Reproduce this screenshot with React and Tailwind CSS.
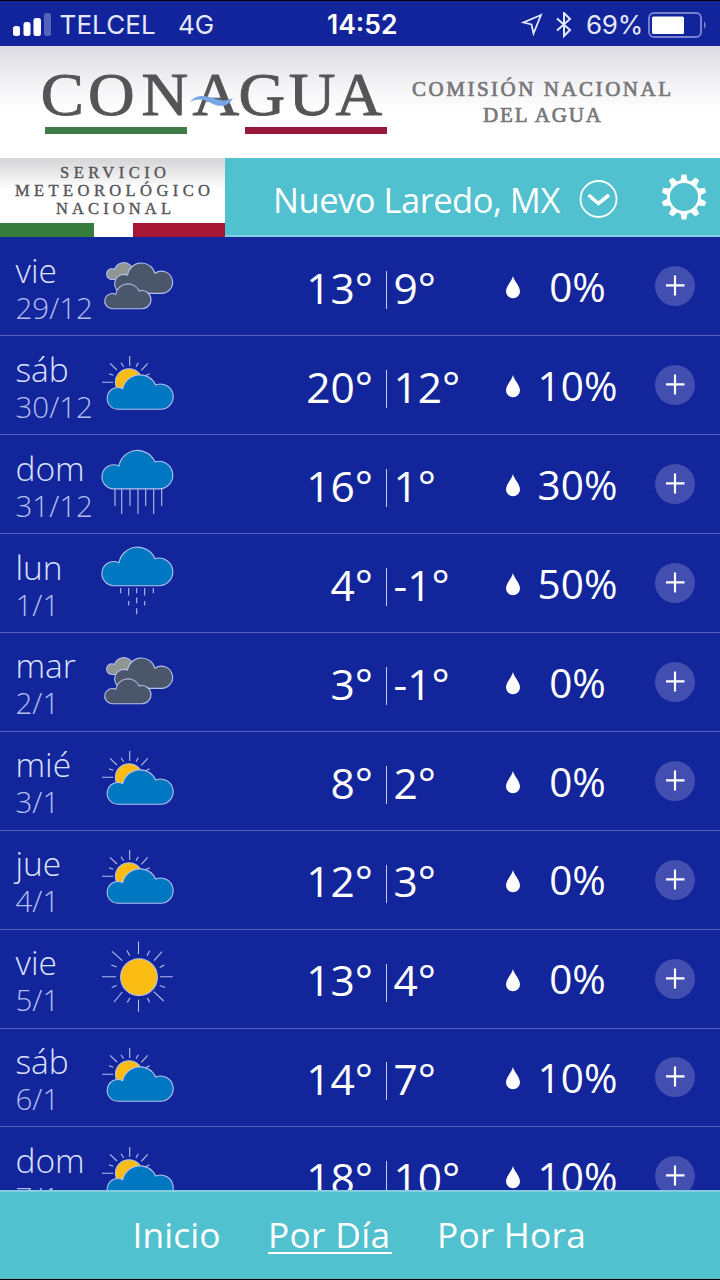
const days = [
  { name: 'vie', date: '29/12', icon: 'cloudy', high: '13°', low: '9°', rain: '0%' },
  { name: 'sáb', date: '30/12', icon: 'partly', high: '20°', low: '12°', rain: '10%' },
  { name: 'dom', date: '31/12', icon: 'rain', high: '16°', low: '1°', rain: '30%' },
  { name: 'lun', date: '1/1', icon: 'drizzle', high: '4°', low: '-1°', rain: '50%' },
  { name: 'mar', date: '2/1', icon: 'cloudy', high: '3°', low: '-1°', rain: '0%' },
  { name: 'mié', date: '3/1', icon: 'partly', high: '8°', low: '2°', rain: '0%' },
  { name: 'jue', date: '4/1', icon: 'partly', high: '12°', low: '3°', rain: '0%' },
  { name: 'vie', date: '5/1', icon: 'sunny', high: '13°', low: '4°', rain: '0%' },
  { name: 'sáb', date: '6/1', icon: 'partly', high: '14°', low: '7°', rain: '10%' },
  { name: 'dom', date: '7/1', icon: 'partly', high: '18°', low: '10°', rain: '10%' },
]

const RAIN_CLOUD = 'M14 53.9H59A13.8 13.8 0 1 0 55 26.9A18.9 18.9 0 0 0 19 30.9A12.05 12.05 0 1 0 14 53.9Z'

function WeatherIcon({ type }) {
  return (
    <svg viewBox="0 0 76 98.9" className="h-[98.9px] w-[76px] shrink-0" fill="none" stroke="#b4c0ee" strokeWidth="1.1">
      {type === 'cloudy' && (
        <>
          <path fill="#8f9694" d="M11.5 42.5H30A9.6 9.6 0 1 0 14.6 32.4A5.4 5.4 0 1 0 11.5 42.5Z" />
          <path fill="#4b566b" d="M24 56.4H61A11.1 11.1 0 1 0 55 36.3A14.1 14.1 0 0 0 27.5 38A9.5 9.5 0 1 0 24 56.4Z" />
          <path fill="#4b566b" d="M12 71.7H41.7A9.05 9.05 0 1 0 39.3 54A12.5 12.5 0 0 0 15.7 57.3A7.6 7.6 0 1 0 12 71.7Z" />
        </>
      )}
      {type === 'partly' && (
        <>
          <path d="M2 46.3H13.3M29.7 20V30M10 27.3L17 34M47.7 27.3L41.3 34.3M9 37.7L13.3 39.3M21 26.7L23.7 30.7M38.3 26.7L36 30.7M49.7 37.7L45.3 39.7" />
          <circle cx="29" cy="46.3" r="13.6" fill="#fbbc14" />
          <path fill="#0078c1" d="M17.7 73.2H60.2A12.6 12.6 0 1 0 55.7 49A17.5 17.5 0 0 0 22.7 52.7A10.8 10.8 0 1 0 17.7 73.2Z" />
        </>
      )}
      {type === 'rain' && (
        <>
          <path d="M15 54V71M21.7 54V79M30 54V71M38 54V79M45.7 54V71M53.7 54V79M61.7 54V71" />
          <path fill="#0078c1" d={RAIN_CLOUD} />
        </>
      )}
      {type === 'drizzle' && (
        <>
          <path fill="#0078c1" transform="translate(0 -2.2)" d={RAIN_CLOUD} />
          <path d="M20.7 54V59.3M28.7 54V61.6M28.7 67V71.6M36.7 54V59.3M36.7 63.6V69.3M36.7 74.3V80.3M44.7 54V61.6M44.7 67V71.6M53.3 54V59.3" />
        </>
      )}
      {type === 'sunny' && (
        <>
          <circle cx="39" cy="48.2" r="18.4" fill="#fbbc14" />
          <path d="M38.5 12.4V25M38.5 70.4V82.7M2 47.8H16M60 47.8H72.7M12 22.4L22.3 31.7M62 22.7L54 31.7M14 73L22.3 63M63.7 72L53.7 62.7" />
          <path d="M11.3 36L16.7 38M27 21.4L29.7 26.7M49.7 21.7L47 26.7M64.3 36L59.7 38.4M11.7 58.4L16.7 56.4M27.3 73.4L30 68.7M49.7 73.4L47.3 68.7M65 58.4L59.7 56.4" />
        </>
      )}
    </svg>
  )
}

function StatusBar() {
  return (
    <div className="flex h-[46px] shrink-0 items-center border-t border-black bg-[#12249b] pt-0.5 font-['Inter',sans-serif] text-[26px] leading-none text-[#e4e8fb]">
      <svg className="ml-[13px] h-[24px] w-[39px]" viewBox="0 0 39 24">
        <rect x="0" y="13" width="7" height="10" rx="2.5" fill="#fff" />
        <rect x="10.5" y="9" width="7" height="14" rx="2.5" fill="#fff" />
        <rect x="20.5" y="5" width="7.5" height="18" rx="2.5" fill="#fff" />
        <rect x="31" y="0" width="7" height="23" rx="2.5" fill="#5663bd" />
      </svg>
      <span className="ml-[7.5px] w-[118.5px] tracking-[0.1px]">TELCEL</span>
      <span className="w-[149px]">4G</span>
      <span className="w-[194px] text-[26.5px] font-semibold text-white">14:52</span>
      <svg className="h-[26px] w-[57px]" viewBox="0 0 57 26" fill="none" stroke="#e4e8fb" strokeWidth="1.8">
        <path d="M20 3L2.5 10.5L10.5 12.5L12.5 21.5Z" strokeLinejoin="miter" />
        <path d="M36 6.5L49 18L43 24V1L49 7L36 18.5" strokeWidth="2" />
      </svg>
      <span className="ml-[8px] w-[62px] tracking-[-0.3px]">69%</span>
      <svg className="h-[26px] w-[61px]" viewBox="0 0 61 26">
        <rect x="1" y="1" width="52" height="24" rx="5" fill="none" stroke="#7682cd" strokeWidth="2" />
        <rect x="4" y="4.5" width="32" height="17.5" rx="1.5" fill="#fff" />
        <path d="M56 9Q59.5 13 56 17Z" fill="#7682cd" />
      </svg>
    </div>
  )
}

function Banner() {
  return (
    <div className="h-[112px] shrink-0 bg-linear-to-b from-[#dcdce3] via-[#f7f6f8] via-40% to-white to-60%">
      <svg viewBox="0 0 720 112" className="h-[112px] w-[720px]" fontFamily="'Liberation Serif', serif">
        <text transform="scale(1.06 1)" x="38.5 83 133.5 181.5 225 272.5 316.5" y="69" fontSize="61" fill="#555557" stroke="#555557" strokeWidth="0.9">CONAGUA</text>
        <path fill="#78a5e6" d="M190 56C198 46 208 51 216 53C223 55 227 55 233 52C228 62 218 61 211 57C204 53 197 52 190 56Z" />
        <rect x="45" y="81" width="142" height="7" fill="#3f7c48" />
        <rect x="245" y="81" width="142" height="7" fill="#98173d" />
        <g fontSize="21" fill="#77777a" stroke="#77777a" strokeWidth="0.7">
          <text x="412" y="50" textLength="259">COMISIÓN NACIONAL</text>
          <text x="483" y="75.5" textLength="118">DEL AGUA</text>
        </g>
      </svg>
    </div>
  )
}

function LocationBar() {
  return (
    <div className="flex h-[79px] shrink-0 bg-[#51c0cf]">
      <div className="h-[79px] w-[225px] bg-linear-to-b from-[#d5d5d7] to-white to-40%">
        <svg viewBox="0 0 225 79" className="h-[79px] w-[225px]" fontFamily="'Liberation Serif', serif" fontSize="16.5" fill="#55555a" stroke="#55555a" strokeWidth="0.4">
          <text x="60" y="20" textLength="106">SERVICIO</text>
          <text x="15" y="38" textLength="195">METEOROLÓGICO</text>
          <text x="56" y="56" textLength="115">NACIONAL</text>
          <rect x="0" y="65" width="94" height="14" fill="#377c3d" stroke="none" />
          <rect x="133" y="65" width="92" height="14" fill="#a51735" stroke="none" />
        </svg>
      </div>
      <div className="flex flex-1 items-center border-b-2 border-[#86cce0] text-white">
        <span className="ml-[48px] w-[305px] whitespace-nowrap pt-2 text-[34.5px] leading-none tracking-[-0.5px]">Nuevo Laredo, MX</span>
        <svg className="mt-1 h-[40px] w-[40px]" viewBox="0 0 40 40" fill="none" stroke="#fff">
          <circle cx="20.5" cy="20" r="18" strokeWidth="1.8" />
          <path d="M10.5 16L20.5 24.5L31 16" strokeWidth="3.6" />
        </svg>
        <svg className="ml-[43px] h-[46px] w-[46px]" viewBox="-23 -23 46 46" fill="none" stroke="#fff">
          <circle r="15.5" strokeWidth="2.8" />
          {[0, 36, 72, 108, 144, 180, 216, 252, 288, 324].map((angle) => (
            <path key={angle} transform={`rotate(${angle})`} d="M-3.6 -15.5L-2.4 -22.5H2.4L3.6 -15.5Z" fill="#fff" stroke="none" />
          ))}
        </svg>
      </div>
    </div>
  )
}

function DayRow({ day }) {
  return (
    <div className="flex h-[98.9px] shrink-0 items-center border-b border-[#5262c0] text-white">
      <div className="w-[99.5px] shrink-0 pl-[15.5px] pt-1.5 font-light">
        <div className="h-[37px] text-[33.5px] leading-[36px] text-[#dce2fb]">{day.name}</div>
        <div className="h-[38px] text-[29.5px] leading-[38px] text-[#b3bef0]">{day.date}</div>
      </div>
      <WeatherIcon type={day.icon} />
      <div className="w-[197.5px] shrink-0 pt-1 text-right text-[42.5px] leading-none">{day.high}</div>
      <div className="ml-[12.5px] mt-2 h-[38px] w-px shrink-0 bg-[#c5cef7]" />
      <div className="ml-[7px] w-[111px] shrink-0 pt-1 text-[42.5px] leading-none">{day.low}</div>
      <svg className="mt-0.5 h-[24px] w-[16px] shrink-0" viewBox="0 0 16 24">
        <path fill="#fff" d="M8 1C9 6 15 11 15 16.5A7 6.8 0 0 1 1 16.5C1 11 7 6 8 1Z" />
      </svg>
      <div className="w-[114px] shrink-0 pt-0.5 text-center text-[40.5px] leading-none">{day.rain}</div>
      <div className="ml-[20px] h-[40px] w-[40px] shrink-0 rounded-full bg-[#424fb0]">
        <svg viewBox="0 0 40 40" stroke="#fff" strokeWidth="2.2">
          <path d="M11 19.3H29.5M20 9.5V29.5" />
        </svg>
      </div>
    </div>
  )
}

export default function App() {
  return (
    <div className="flex h-[1280px] w-[720px] flex-col overflow-hidden bg-[#12259b] font-['Open_Sans',sans-serif]">
      <StatusBar />
      <Banner />
      <LocationBar />
      <div className="h-[953px] shrink-0 overflow-hidden pt-[0.4px]">
        {days.map((day) => (
          <DayRow key={day.date} day={day} />
        ))}
      </div>
      <nav className="flex h-[90px] shrink-0 border-b border-t-2 border-b-black border-t-[#86cce0] bg-[#51c0cf] pt-[21px] text-[35.3px] leading-[42px] text-white">
        <span className="ml-[132.5px] w-[135.5px] tracking-[0.1px]">Inicio</span>
        <span className="mr-[45px] h-[41px] w-[124px] whitespace-nowrap border-b-2 border-white tracking-[0.3px]">Por Día</span>
        <span className="whitespace-nowrap tracking-[0.2px]">Por Hora</span>
      </nav>
    </div>
  )
}
